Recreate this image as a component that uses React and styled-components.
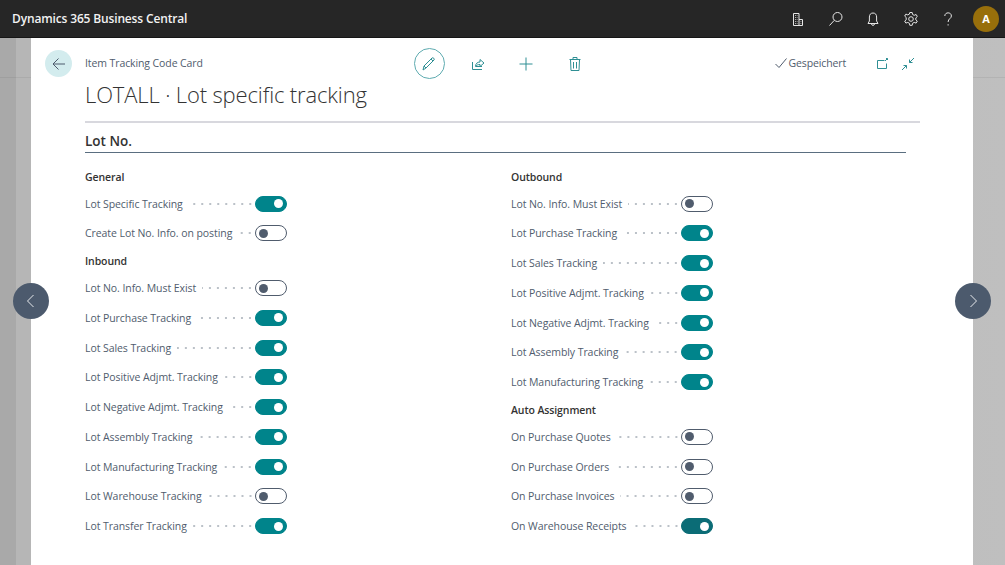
import React from 'react'
import styled, { createGlobalStyle } from 'styled-components'

const Global = createGlobalStyle`
  html, body { margin: 0; padding: 0; }
  body { font-family: "Open Sans", "Liberation Sans", sans-serif; overflow: hidden; }
`

const Page = styled.div`
  width: 1005px;
  height: 565px;
  display: flex;
  flex-direction: column;
  overflow: hidden;
`

const TopBar = styled.header`
  height: 38px;
  flex: none;
  display: flex;
  align-items: center;
  background: #262626;
  padding-left: 12px;
  box-sizing: border-box;
  border-bottom: 1px solid #161616;
`

const Brand = styled.div`
  color: #f2f2f2;
  font-size: 12px;
  font-weight: 600;
  letter-spacing: -0.15px;
  flex: 1;
`

const TopIcons = styled.div`
  display: flex;
  align-items: center;
`

const TopIcon = styled.div`
  width: 37.5px;
  height: 38px;
  display: flex;
  align-items: center;
  justify-content: center;
`

const Avatar = styled.div`
  width: 26px;
  height: 26px;
  margin: 0 6px 0 6px;
  border-radius: 50%;
  background: #986f0b;
  color: #fff;
  font-size: 11px;
  font-weight: 700;
  display: flex;
  align-items: center;
  justify-content: center;
`

const Stage = styled.div`
  position: relative;
  flex: 1;
  display: flex;
  padding: 0 32px 0 31px;
  background:
    linear-gradient(to right, #a9a9a9 0 16px, #b6b6b6 16px 31px, transparent 31px),
    linear-gradient(to right, #adadad, #bfbfbf);
`

const BackdropLine = styled.div`
  position: absolute;
  top: 39px;
  left: 0;
  right: 0;
  height: 1px;
  background: rgba(0, 0, 0, 0.06);
`

const Card = styled.main`
  position: relative;
  flex: 1;
  background: #fff;
  display: flex;
  flex-direction: column;
  padding: 10px 0 0 54px;
  min-width: 0;
`

const HeadRow = styled.div`
  display: flex;
  align-items: center;
  height: 31px;
  margin-left: -40px;
`

const BackButton = styled.div`
  width: 27px;
  height: 27px;
  border-radius: 50%;
  background: #d3ecee;
  margin-right: 13px;
  display: flex;
  align-items: center;
  justify-content: center;
  flex: none;
`

const Crumb = styled.div`
  flex: 0 0 320px;
  color: #505c6d;
  font-size: 10.5px;
  letter-spacing: -0.1px;
  padding-bottom: 1px;
`

const ActionButton = styled.div`
  width: 48.5px;
  height: 31px;
  display: flex;
  align-items: center;
  justify-content: center;
  flex: none;
`

const EditCircle = styled.div`
  width: 29px;
  height: 29px;
  border: 1px solid #5eabb0;
  border-radius: 50%;
  display: flex;
  align-items: center;
  justify-content: center;
`

const Saved = styled.div`
  margin-left: 175.5px;
  display: flex;
  align-items: center;
  gap: 2px;
  color: #505c6d;
  font-size: 10.5px;
  letter-spacing: -0.12px;
  width: 94.5px;
  flex: none;
  padding-bottom: 1px;
`

const SmallAction = styled.div`
  width: 26px;
  height: 31px;
  display: flex;
  align-items: center;
  justify-content: center;
  flex: none;
`

const Title = styled.h1`
  margin: 0;
  height: 32px;
  line-height: 30px;
  font-size: 22px;
  font-weight: 300;
  letter-spacing: -0.14px;
  color: #333;
`

const Divider = styled.div`
  margin: 10px 53px 0 0;
  height: 2px;
  background: #d8d8de;
`

const SectionTitle = styled.h2`
  margin: 0 67px 0 0;
  line-height: 36px;
  box-sizing: border-box;
  border-bottom: 1px solid #5a6e80;
  height: 30px;
  font-size: 13.5px;
  font-weight: 600;
  color: #333;
`

const Columns = styled.div`
  display: grid;
  grid-template-columns: 426px 202px;
  padding-top: 10.8px;
`

const Column = styled.div`
  width: 202px;
`

const GroupTitle = styled.div`
  height: 25px;
  line-height: 26px;
  font-size: 10.5px;
  font-weight: 600;
  letter-spacing: -0.1px;
  color: #333;
`

const Row = styled.div`
  height: 29.75px;
  display: flex;
  align-items: center;
`

const Label = styled.span`
  color: #505c6d;
  font-size: 10.5px;
  letter-spacing: -0.07px;
  white-space: nowrap;
`

const Leader = styled.span`
  flex: 1;
  height: 2px;
  margin: 0 1px 0 6px;
  background-image: radial-gradient(circle at 50% 50%, #b9bfc6 0.7px, transparent 0.9px);
  background-size: 8px 2px;
  background-position: right center;
  background-repeat: repeat-x;
`

const Toggle = styled.span`
  width: 32px;
  height: 16px;
  box-sizing: border-box;
  flex: none;
  border-radius: 8px;
  display: flex;
  align-items: center;
  padding: 0 3px;
  justify-content: ${p => (p.$on ? 'flex-end' : 'flex-start')};
  background: ${p => (p.$on ? p.$tone : '#fff')};
  border: 1px solid ${p => (p.$on ? p.$tone : '#505c6d')};
  &::after {
    content: '';
    width: 9px;
    height: 9px;
    border-radius: 50%;
    background: ${p => (p.$on ? '#fff' : '#505c6d')};
  }
`

const NavButton = styled.div`
  position: absolute;
  top: 245px;
  ${p => (p.$side === 'left' ? 'left: 13px;' : 'right: 14px;')}
  width: 36px;
  height: 36px;
  border-radius: 50%;
  background: #4c5a6d;
  display: flex;
  align-items: center;
  justify-content: center;
`

const Icon = ({ w = 16, h = 16, color = '#2f8f94', sw = 1, children }) => (
  <svg width={w} height={h} viewBox={`0 0 ${w} ${h}`} fill="none" stroke={color} strokeWidth={sw}>
    {children}
  </svg>
)

const Field = ({ label, on, tone = '#00848b' }) => (
  <Row>
    <Label>{label}</Label>
    <Leader />
    <Toggle $on={on} $tone={tone} />
  </Row>
)

const left = [
  { title: 'General', rows: [['Lot Specific Tracking', true], ['Create Lot No. Info. on posting', false]] },
  {
    title: 'Inbound',
    rows: [
      ['Lot No. Info. Must Exist', false],
      ['Lot Purchase Tracking', true],
      ['Lot Sales Tracking', true],
      ['Lot Positive Adjmt. Tracking', true],
      ['Lot Negative Adjmt. Tracking', true],
      ['Lot Assembly Tracking', true],
      ['Lot Manufacturing Tracking', true],
      ['Lot Warehouse Tracking', false],
      ['Lot Transfer Tracking', true],
    ],
  },
]

const right = [
  {
    title: 'Outbound',
    rows: [
      ['Lot No. Info. Must Exist', false],
      ['Lot Purchase Tracking', true],
      ['Lot Sales Tracking', true],
      ['Lot Positive Adjmt. Tracking', true],
      ['Lot Negative Adjmt. Tracking', true],
      ['Lot Assembly Tracking', true],
      ['Lot Manufacturing Tracking', true],
    ],
  },
  {
    title: 'Auto Assignment',
    rows: [
      ['On Purchase Quotes', false],
      ['On Purchase Orders', false],
      ['On Purchase Invoices', false],
      ['On Warehouse Receipts', true, '#0b6c76'],
    ],
  },
]

const FieldColumn = ({ groups }) => (
  <Column>
    {groups.map(g => (
      <div key={g.title}>
        <GroupTitle>{g.title}</GroupTitle>
        {g.rows.map(([label, on, tone]) => (
          <Field key={label} label={label} on={on} tone={tone} />
        ))}
      </div>
    ))}
  </Column>
)

export default function App() {
  const light = '#e6e6e6'
  return (
    <Page>
      <Global />
      <TopBar>
        <Brand>Dynamics 365 Business Central</Brand>
        <TopIcons>
          <TopIcon>
            <Icon color={light}>
              <path d="M3.500 2.500h5.500v12h-5.500zM9 8.500h3.500v6H9" />
              <path d="M5 4.500h2.500M5 6.500h2.500M5 8.500h2.500M5 10.500h2.500M5 12.500h2.500M10.500 10.500h.8M10.500 12.500h.8" strokeOpacity="0.7" strokeDasharray="1 .7" />
            </Icon>
          </TopIcon>
          <TopIcon>
            <Icon color={light}>
              <circle cx="9.500" cy="6" r="4.500" />
              <path d="M6.300 9.300 1.500 14.500" />
            </Icon>
          </TopIcon>
          <TopIcon>
            <Icon color={light}>
              <path d="M8 2c-2.500 0-3.600 1.800-3.600 4v4L3 12.500h10L11.600 10V6c0-2.200-1.100-4-3.600-4zM6.500 13c0 1.800 3 1.800 3 0" />
            </Icon>
          </TopIcon>
          <TopIcon>
            <Icon color={light}>
              <circle cx="8" cy="8" r="2.300" />
              <path d="M6.800 1.500h2.400l.4 2 1.600.8 1.900-.8 1.200 2-1.500 1.400v1.900l1.500 1.300-1.200 2-1.900-.7-1.600.9-.4 2H6.800l-.4-2-1.600-.9-1.900.7-1.200-2 1.500-1.300V6.500L1.700 5.100l1.200-2 1.900.8 1.600-.8z" />
            </Icon>
          </TopIcon>
          <TopIcon>
            <Icon color={light}>
              <path d="M4.800 5c0-4.200 6.600-4.200 6.600 0 0 2.600-3.300 2.600-3.300 6" />
              <path d="M8.100 13.200v1.300" />
            </Icon>
          </TopIcon>
          <Avatar>A</Avatar>
        </TopIcons>
      </TopBar>
      <Stage>
        <BackdropLine />
        <Card>
          <HeadRow>
            <BackButton>
              <Icon color="#4c5a6d">
                <path d="M14 8H2M7.500 2.500 2 8l5.500 5.500" />
              </Icon>
            </BackButton>
            <Crumb>Item Tracking Code Card</Crumb>
            <ActionButton>
              <EditCircle>
                <Icon>
                  <path d="M2 14l1-4L11 2c1-1 3 1 2 2L5 12zM3 10l2 2M10 3l2 2" />
                </Icon>
              </EditCircle>
            </ActionButton>
            <ActionButton>
              <Icon>
                <path d="M2.500 6v7.500h9.500M12 10.500 6 10.500M5.500 10.500c0-3 2-4.500 4.500-4.500V3.500l4 3.500-4 3.500V8.500c-2 0-3.500.5-4.500 2z" />
              </Icon>
            </ActionButton>
            <ActionButton>
              <Icon>
                <path d="M8 1.500v13M1.500 8h13" />
              </Icon>
            </ActionButton>
            <ActionButton>
              <Icon>
                <path d="M2.500 3.500h11M6 3.500V1.500h4v2M3.500 3.500l.5 11h8l.5-11M6.500 6v6.500M9.500 6v6.500" />
              </Icon>
            </ActionButton>
            <Saved>
              <Icon w={12} h={12} color="#505c6d">
                <path d="M.5 7 4 10.500 11.500 1.500" />
              </Icon>
              Gespeichert
            </Saved>
            <SmallAction>
              <Icon w={14} h={14}>
                <path d="M9.500 3.500H2.500v8h9V6.500M10 4l2.500-2.500M11 1.500h1.500V3" />
              </Icon>
            </SmallAction>
            <SmallAction>
              <Icon w={14} h={14}>
                <path d="M13 1 8.500 5.500M8.500 2.500v3H11.500M1 13l4.500-4.500M2.500 8.500h3v3" />
              </Icon>
            </SmallAction>
          </HeadRow>
          <Title>LOTALL · Lot specific tracking</Title>
          <Divider />
          <SectionTitle>Lot No.</SectionTitle>
          <Columns>
            <FieldColumn groups={left} />
            <FieldColumn groups={right} />
          </Columns>
        </Card>
        <NavButton $side="left">
          <Icon color="#e8eaed">
            <path d="M10.500 2 4.500 8l6 6" />
          </Icon>
        </NavButton>
        <NavButton $side="right">
          <Icon color="#e8eaed">
            <path d="M5.500 2l6 6-6 6" />
          </Icon>
        </NavButton>
      </Stage>
    </Page>
  )
}
